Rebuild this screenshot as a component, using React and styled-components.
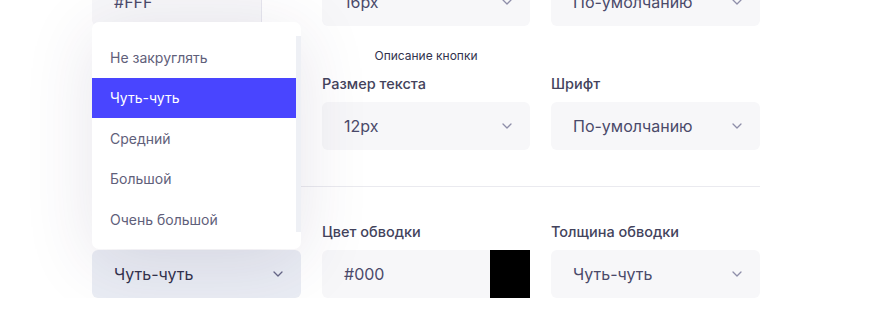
import React from 'react';
import styled, { createGlobalStyle } from 'styled-components';

const Global = createGlobalStyle`
  html, body { margin: 0; padding: 0; background: #ffffff; overflow: hidden; }
  body { font-family: Inter, "Noto Sans", sans-serif; -webkit-font-smoothing: antialiased; }
  * { box-sizing: border-box; }
`;

const Page = styled.div`
  width: 668px;
  margin: -50px 0 0 92px;
  display: flex;
  flex-direction: column;
`;

const Row = styled.div`
  display: grid;
  grid-template-columns: 209px 208px 209px;
  column-gap: 21px;
`;

const CaptionRow = styled(Row)`
  margin: 22px 0 10px;
`;

const Caption = styled.div`
  grid-column: 2;
  text-align: center;
  font-size: 12px;
  line-height: 16px;
  color: #32324d;
`;

const Field = styled.div`
  display: flex;
  flex-direction: column;
  gap: 8px;
  position: relative;
`;

const Label = styled.label`
  font-size: 14.5px;
  line-height: 20px;
  font-weight: 500;
  color: #43435c;
`;

const Control = styled.div`
  position: relative;
`;

const Select = styled.div`
  height: 48px;
  border-radius: 6px;
  background: ${p => (p.$open ? '#eaedf4' : '#f7f7f9')};
  display: flex;
  align-items: center;
  justify-content: space-between;
  padding: 0 18px 0 22px;
  font-size: 16px;
  color: ${p => (p.$open ? '#32324d' : '#4a4a6a')};
`;

const ColorBox = styled.div`
  height: 48px;
  display: flex;
`;

const ColorValue = styled.div`
  flex: 1;
  display: flex;
  align-items: center;
  padding-left: 22px;
  background: #f7f7f9;
  border-radius: 6px 0 0 6px;
  font-size: 16px;
  color: #4a4a6a;
`;

const Swatch = styled.div`
  width: 40px;
  background: ${p => p.$color};
  border-left: 1px solid ${p => (p.$color === '#FFF' ? '#e6e6ee' : p.$color)};
`;

const Divider = styled.hr`
  border: 0;
  height: 1px;
  background: #eaeaef;
  margin: 36px 0 35px;
  width: 100%;
`;

const Menu = styled.div`
  position: absolute;
  left: 0;
  right: 0;
  bottom: calc(100% + 1px);
  height: 227px;
  background: #ffffff;
  border-radius: 7px;
  box-shadow: 0 12px 70px rgba(60, 40, 90, 0.12);
  display: flex;
  z-index: 10;
`;

const List = styled.ul`
  list-style: none;
  margin: 0;
  padding: 15px 0 10px;
  flex: 1;
  display: flex;
  flex-direction: column;
`;

const Item = styled.li`
  height: 40.5px;
  flex: none;
  display: flex;
  align-items: center;
  padding-left: 18px;
  font-size: 14px;
  color: ${p => (p.$active ? '#ffffff' : '#5f607a')};
  background: ${p => (p.$active ? '#4945ff' : 'transparent')};
`;

const Track = styled.div`
  width: 5px;
  margin: 14px 0 17px;
  background: #eef0f5;
`;

const ChevronSvg = styled.svg`
  flex: none;
  width: 10px;
  height: 6px;
`;

const Chevron = ({ dark }) => (
  <ChevronSvg viewBox="0 0 10 6" fill="none">
    <path d="M1 1l4 4 4-4" stroke={dark ? '#666687' : '#8e8ea9'} strokeWidth="1.3" strokeLinecap="round" strokeLinejoin="round" />
  </ChevronSvg>
);

const SelectField = ({ label, value, open, children }) => (
  <Field>
    <Label>{label}</Label>
    <Control>
      {children}
      <Select $open={open}>
        <span>{value}</span>
        <Chevron dark={open} />
      </Select>
    </Control>
  </Field>
);

const ColorField = ({ label, value }) => (
  <Field>
    <Label>{label}</Label>
    <ColorBox>
      <ColorValue>{value}</ColorValue>
      <Swatch $color={value} />
    </ColorBox>
  </Field>
);

const radii = ['Не закруглять', 'Чуть-чуть', 'Средний', 'Большой', 'Очень большой'];

export default function App() {
  return (
    <>
      <Global />
      <Page>
        <Row>
          <ColorField label="Цвет фона" value="#FFF" />
          <SelectField label="Размер текста" value="16px" />
          <SelectField label="Шрифт" value="По-умолчанию" />
        </Row>
        <CaptionRow>
          <Caption>Описание кнопки</Caption>
        </CaptionRow>
        <Row>
          <ColorField label="Цвет текста" value="#000" />
          <SelectField label="Размер текста" value="12px" />
          <SelectField label="Шрифт" value="По-умолчанию" />
        </Row>
        <Divider />
        <Row>
          <SelectField label="Скругление" value="Чуть-чуть" open>
            <Menu>
              <List>
                {radii.map(r => (
                  <Item key={r} $active={r === 'Чуть-чуть'}>{r}</Item>
                ))}
              </List>
              <Track />
            </Menu>
          </SelectField>
          <ColorField label="Цвет обводки" value="#000" />
          <SelectField label="Толщина обводки" value="Чуть-чуть" />
        </Row>
      </Page>
    </>
  );
}
